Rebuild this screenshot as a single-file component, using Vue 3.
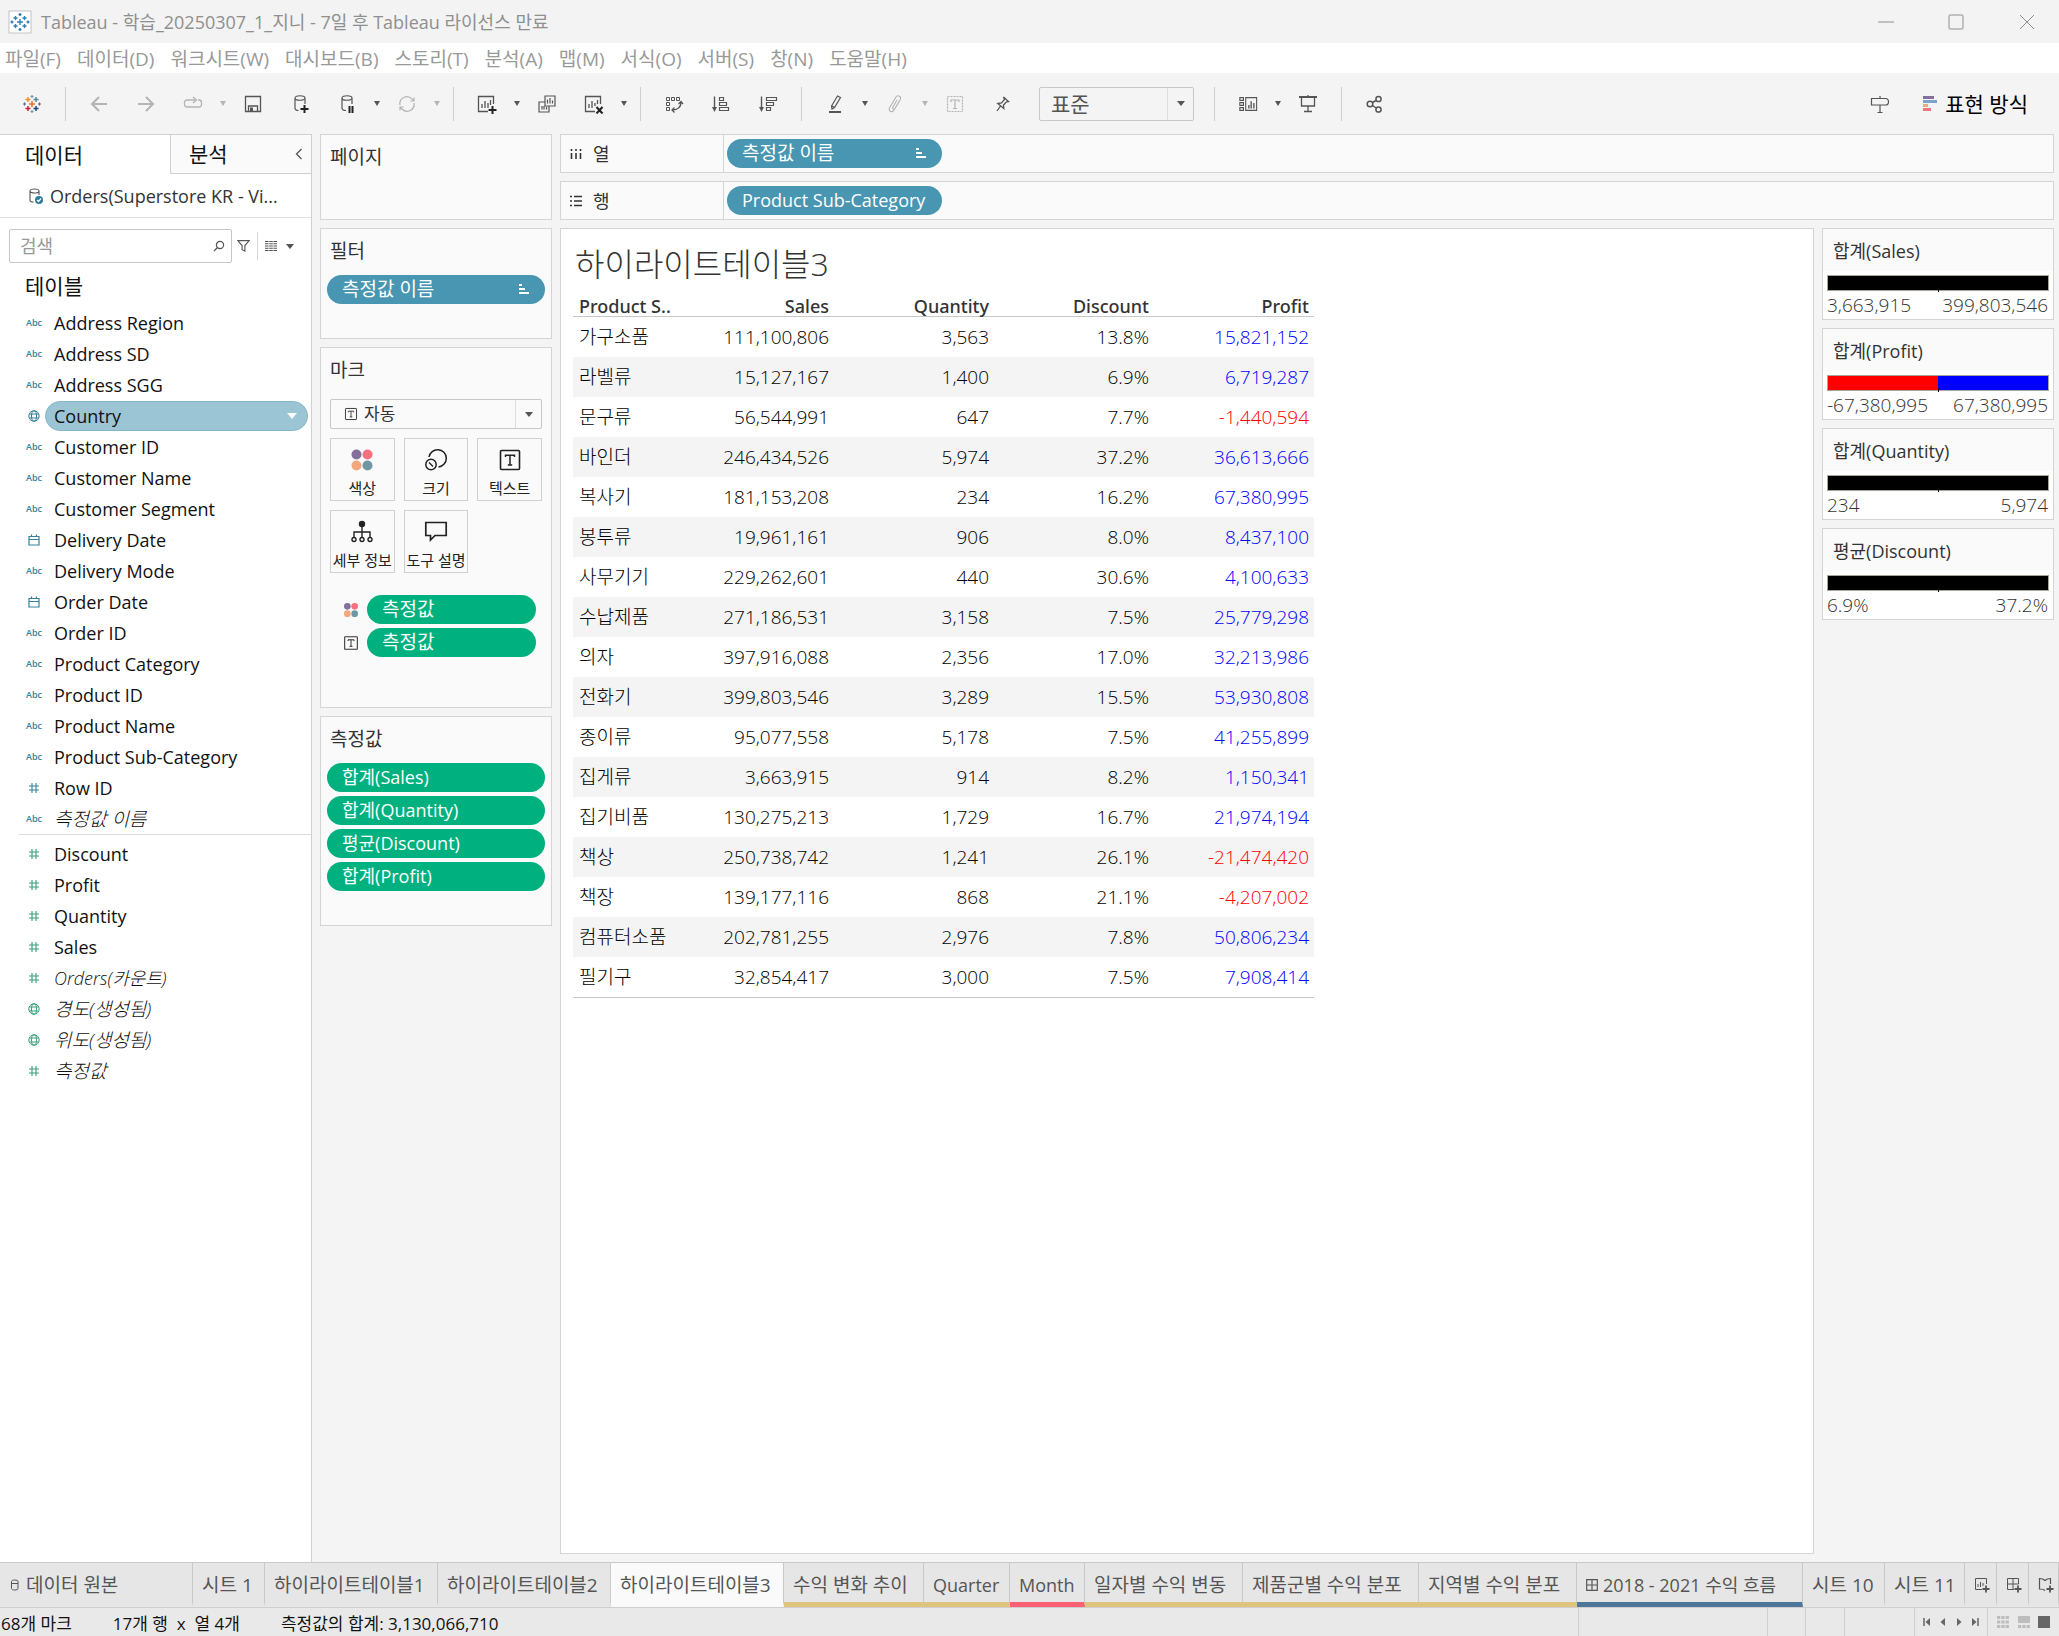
<script setup>
import { ref } from 'vue'

const menus = ['파일(F)', '데이터(D)', '워크시트(W)', '대시보드(B)', '스토리(T)', '분석(A)', '맵(M)', '서식(O)', '서버(S)', '창(N)', '도움말(H)']

const toolbar = [
  { icon: 'logo', label: '시작 페이지', cls: 'plain' },
  { sep: true },
  { icon: 'back', label: '실행 취소', cls: 'dim' },
  { icon: 'forward', label: '다시 실행', cls: 'dim' },
  { icon: 'replay', label: '재생', cls: 'dim' },
  { caret: true, cls: 'dim' },
  { icon: 'save', label: '저장' },
  { icon: 'db-add', label: '새 데이터 원본' },
  { icon: 'db-pause', label: '자동 업데이트 일시 중지' },
  { caret: true },
  { icon: 'refresh', label: '업데이트 실행', cls: 'dim' },
  { caret: true, cls: 'dim' },
  { sep: true },
  { icon: 'sheet-add', label: '새 워크시트' },
  { caret: true },
  { icon: 'duplicate', label: '복제' },
  { icon: 'sheet-clear', label: '시트 지우기' },
  { caret: true },
  { sep: true },
  { icon: 'swap', label: '행과 열 바꾸기' },
  { icon: 'sort-asc', label: '오름차순 정렬' },
  { icon: 'sort-desc', label: '내림차순 정렬' },
  { sep: true },
  { icon: 'pen', label: '하이라이트' },
  { caret: true },
  { icon: 'clip', label: '그룹 멤버', cls: 'dim' },
  { caret: true, cls: 'dim' },
  { icon: 'label', label: '마크 레이블 표시', cls: 'dim' },
  { icon: 'pin', label: '축 고정' },
]

const toolbarEnd = [
  { sep: true },
  { icon: 'cards', label: '카드 표시/숨기기' },
  { caret: true },
  { icon: 'present', label: '프레젠테이션 모드' },
  { sep: true },
  { icon: 'share', label: '공유' },
]

const dimensions = [
  { name: 'Address Region', type: 'abc' },
  { name: 'Address SD', type: 'abc' },
  { name: 'Address SGG', type: 'abc' },
  { name: 'Country', type: 'globe' },
  { name: 'Customer ID', type: 'abc' },
  { name: 'Customer Name', type: 'abc' },
  { name: 'Customer Segment', type: 'abc' },
  { name: 'Delivery Date', type: 'date' },
  { name: 'Delivery Mode', type: 'abc' },
  { name: 'Order Date', type: 'date' },
  { name: 'Order ID', type: 'abc' },
  { name: 'Product Category', type: 'abc' },
  { name: 'Product ID', type: 'abc' },
  { name: 'Product Name', type: 'abc' },
  { name: 'Product Sub-Category', type: 'abc' },
  { name: 'Row ID', type: 'hash' },
  { name: '측정값 이름', type: 'abc', generated: true },
]

const measures = [
  { name: 'Discount', type: 'hash' },
  { name: 'Profit', type: 'hash' },
  { name: 'Quantity', type: 'hash' },
  { name: 'Sales', type: 'hash' },
  { name: 'Orders(카운트)', type: 'hash', generated: true },
  { name: '경도(생성됨)', type: 'globe', generated: true },
  { name: '위도(생성됨)', type: 'globe', generated: true },
  { name: '측정값', type: 'hash', generated: true },
]

const fieldGroups = [
  { id: 'dimensions', items: dimensions },
  { id: 'measures', items: measures },
]

const selectedField = ref('Country')
const search = ref('')

const markCards = [
  { icon: 'color', label: '색상' },
  { icon: 'size', label: '크기' },
  { icon: 'text', label: '텍스트' },
  { icon: 'detail', label: '세부 정보' },
  { icon: 'tooltip', label: '도구 설명' },
]

const measureValues = ['합계(Sales)', '합계(Quantity)', '평균(Discount)', '합계(Profit)']

const columns = ['Sales', 'Quantity', 'Discount', 'Profit']
const rows = [
  ['가구소품', '111,100,806', '3,563', '13.8%', '15,821,152'],
  ['라벨류', '15,127,167', '1,400', '6.9%', '6,719,287'],
  ['문구류', '56,544,991', '647', '7.7%', '-1,440,594'],
  ['바인더', '246,434,526', '5,974', '37.2%', '36,613,666'],
  ['복사기', '181,153,208', '234', '16.2%', '67,380,995'],
  ['봉투류', '19,961,161', '906', '8.0%', '8,437,100'],
  ['사무기기', '229,262,601', '440', '30.6%', '4,100,633'],
  ['수납제품', '271,186,531', '3,158', '7.5%', '25,779,298'],
  ['의자', '397,916,088', '2,356', '17.0%', '32,213,986'],
  ['전화기', '399,803,546', '3,289', '15.5%', '53,930,808'],
  ['종이류', '95,077,558', '5,178', '7.5%', '41,255,899'],
  ['집게류', '3,663,915', '914', '8.2%', '1,150,341'],
  ['집기비품', '130,275,213', '1,729', '16.7%', '21,974,194'],
  ['책상', '250,738,742', '1,241', '26.1%', '-21,474,420'],
  ['책장', '139,177,116', '868', '21.1%', '-4,207,002'],
  ['컴퓨터소품', '202,781,255', '2,976', '7.8%', '50,806,234'],
  ['필기구', '32,854,417', '3,000', '7.5%', '7,908,414'],
]

const legends = [
  { title: '합계(Sales)', min: '3,663,915', max: '399,803,546' },
  { title: '합계(Profit)', min: '-67,380,995', max: '67,380,995', diverging: true },
  { title: '합계(Quantity)', min: '234', max: '5,974' },
  { title: '평균(Discount)', min: '6.9%', max: '37.2%' },
]

const sheets = [
  { name: '데이터 원본', icon: 'db-small' },
  { name: '시트 1' },
  { name: '하이라이트테이블1' },
  { name: '하이라이트테이블2' },
  { name: '하이라이트테이블3' },
  { name: '수익 변화 추이', color: 'yellow' },
  { name: 'Quarter', color: 'yellow' },
  { name: 'Month', color: 'pink' },
  { name: '일자별 수익 변동', color: 'yellow' },
  { name: '제품군별 수익 분포', color: 'yellow' },
  { name: '지역별 수익 분포', color: 'yellow' },
  { name: '2018 - 2021 수익 흐름', color: 'blue', icon: 'dashboard' },
  { name: '시트 10' },
  { name: '시트 11' },
]
const activeSheet = ref('하이라이트테이블3')

const newSheetButtons = [
  { icon: 'new-sheet', label: '새 워크시트' },
  { icon: 'new-dashboard', label: '새 대시보드' },
  { icon: 'new-story', label: '새 스토리' },
]

const isHangul = (text) => /^[가-힣]/.test(text)
</script>

<template>
  <svg class="defs" aria-hidden="true">
    <symbol id="i-app" viewBox="0 0 24 24">
      <rect x="1" y="1" width="22" height="22" fill="#fff" stroke="#c4c4c4" />
      <g stroke="#2f7fb5" stroke-width="1.4">
        <path d="M12 9v6M9 12h6M7.500 6v4M5.500 8h4M16.500 6v4M14.500 8h4M7.500 14v4M5.500 16h4M16.500 14v4M14.500 16h4M12 3v3M10.500 4.500h3M12 18v3M10.500 19.500h3M4 10.500v3M2.500 12h3M20 10.500v3M18.500 12h3" />
      </g>
    </symbol>
    <symbol id="i-logo" viewBox="0 0 20 20">
      <path d="M10 7v6M7 10h6" stroke="#e8762d" stroke-width="1.600" />
      <path d="M6 3v5M3.500 5.500h5" stroke="#eb912c" stroke-width="1.500" />
      <path d="M14 3v5M11.500 5.500h5" stroke="#59879b" stroke-width="1.500" />
      <path d="M6 12v5M3.500 14.500h5" stroke="#c72035" stroke-width="1.500" />
      <path d="M14 12v5M11.500 14.500h5" stroke="#1f457e" stroke-width="1.500" />
      <path d="M10 1v3M8.500 2.500h3M10 16v3M8.500 17.500h3" stroke="#7199a6" stroke-width="1.200" />
      <path d="M2.500 8.500v3M1 10h3M17.500 8.500v3M16 10h3" stroke="#5b6591" stroke-width="1.200" />
    </symbol>
    <symbol id="i-back" viewBox="0 0 20 20"><path d="M18 10H3M10 3L3 10l7 7" fill="none" stroke="currentColor" stroke-width="2" /></symbol>
    <symbol id="i-forward" viewBox="0 0 20 20"><path d="M2 10h15M10 3l7 7-7 7" fill="none" stroke="currentColor" stroke-width="2" /></symbol>
    <symbol id="i-replay" viewBox="0 0 20 20"><path d="M6 13H4a2.500 2.500 0 0 1-2.500-2.500V8.500A2.500 2.500 0 0 1 4 6h8M15 6h1a2.500 2.500 0 0 1 2.500 2.500v2A2.500 2.500 0 0 1 16 13H6M10 3l3.500 3L10 9" fill="none" stroke="currentColor" stroke-width="1.300" /></symbol>
    <symbol id="i-save" viewBox="0 0 20 20"><path d="M2.500 2.500h15v15h-15zM5.500 17v-5h9v5" fill="none" stroke="currentColor" stroke-width="1.300" /><path d="M7 13.500h3V17H7z" fill="currentColor" /></symbol>
    <symbol id="i-db-add" viewBox="0 0 20 20"><path d="M5 4v10c0 1.500 1 2.500 3.500 2.500M15 4v6M5 4c0-3 10-3 10 0s-10 3-10 0z" fill="none" stroke="currentColor" stroke-width="1.200" /><path d="M14.500 11v8M10.500 15h8" stroke="#222" stroke-width="2" /></symbol>
    <symbol id="i-db-pause" viewBox="0 0 20 20"><path d="M5 4v10c0 1.500 1 2.500 4 2.500M15 4v6M5 4c0-3 10-3 10 0s-10 3-10 0z" fill="none" stroke="currentColor" stroke-width="1.200" /><path d="M12.500 12v7M15.500 12v7" stroke="#222" stroke-width="2" /></symbol>
    <symbol id="i-refresh" viewBox="0 0 20 20"><path d="M3 11a7 7 0 0 1 12-6l2 2M17 9a7 7 0 0 1-12 6l-2-2M17 3.500V7h-3.500M3 16.500V13h3.500" fill="none" stroke="currentColor" stroke-width="1.200" /></symbol>
    <symbol id="i-sheet-add" viewBox="0 0 20 20"><path d="M16.500 10V2.500h-15v15H11M5 14v-4M8 14V7M11 14V9M13.500 11V6" fill="none" stroke="currentColor" stroke-width="1.300" /><path d="M15.500 12v8M11.500 16h8" stroke="#222" stroke-width="2" /></symbol>
    <symbol id="i-duplicate" viewBox="0 0 20 20"><path d="M8 2h10v10H8zM8 8H2v10h10v-6M10.500 9.500v-4M13 9.500V4M15.500 9.500v-3M5 15.500V12M7 15.500V12M9.500 15.500V13" fill="none" stroke="currentColor" stroke-width="1.200" /></symbol>
    <symbol id="i-sheet-clear" viewBox="0 0 20 20"><path d="M16.500 10V2.500h-15v15H11M5 14v-4M8 14V7M11 12V9M13.500 10V6" fill="none" stroke="currentColor" stroke-width="1.300" /><path d="M12.500 13l6 6.500M18.500 13l-6 6.500" stroke="#222" stroke-width="2" /></symbol>
    <symbol id="i-swap" viewBox="0 0 20 20"><path d="M2.500 3.500h3v3h-3zM7.500 3.500h3v3h-3zM12.500 3.500h3v3h-3zM2.500 8.500h3v3h-3zM2.500 13.500h3v3h-3z" fill="none" stroke="currentColor" /><path d="M8 16c5 0 9-2 9-8M14.500 10L17 7.500l2 2.500M10.500 13.500L8 16l2.500 2.500" fill="none" stroke="currentColor" stroke-width="1.300" /></symbol>
    <symbol id="i-sort-asc" viewBox="0 0 20 20"><path d="M8.500 3.500h4v3h-4zM8.500 8.500h7v3h-7zM8.500 13.500h9v3h-9z" fill="none" stroke="currentColor" stroke-width="1.200" /><path d="M3.500 2.500V14" stroke="currentColor" stroke-width="1.400" /><path d="M1 13h5l-2.500 5z" fill="currentColor" /></symbol>
    <symbol id="i-sort-desc" viewBox="0 0 20 20"><path d="M8.500 3.500h10v3h-10zM8.500 8.500h7v3h-7zM8.500 13.500h4v3h-4z" fill="none" stroke="currentColor" stroke-width="1.200" /><path d="M3.500 2.500V14" stroke="currentColor" stroke-width="1.400" /><path d="M1 13h5l-2.500 5z" fill="currentColor" /></symbol>
    <symbol id="i-pen" viewBox="0 0 20 20"><path d="M12.500 2l3 1.500-6 10-2.500 1.500-.5-3z M7 12l2.500 1.500" fill="none" stroke="currentColor" stroke-width="1.200" /><path d="M4 17h12v2H4z" fill="currentColor" /></symbol>
    <symbol id="i-clip" viewBox="0 0 20 20"><path d="M14.500 7l-5.500 9c-1 1.800-2.500 2-3.800 1.200S4 14.500 5 13l6-10c.8-1.300 2.300-1.500 3.500-.8s1.500 2 .8 3.300l-5.500 9c-.8 1.200-2.800.2-2-1.200L12 6" fill="none" stroke="currentColor" stroke-width="1.100" /></symbol>
    <symbol id="i-label" viewBox="0 0 20 20"><path d="M2.500 2.500h15v15h-15z" fill="none" stroke="currentColor" stroke-width="1.200" stroke-dasharray="2 1" /><path d="M6 8V6h8v2M10 6v8M8 14.500h4" fill="none" stroke="currentColor" stroke-width="1.200" /></symbol>
    <symbol id="i-pin" viewBox="0 0 20 20"><path d="M11.500 3l5 4.500-2 .3-3 3.200.3 3.500-6-5 3.700-.5 3-3.500zM8.500 12L5 17" fill="none" stroke="currentColor" stroke-width="1.300" /></symbol>
    <symbol id="i-cards" viewBox="0 0 22 20"><path d="M2 3h4v3H2zM2 8.500h4v3H2zM2 14h4v3H2zM8.500 3h12v14h-12z" fill="none" stroke="currentColor" stroke-width="1.200" /><path d="M12 15v-4M14.500 15V7M17.500 15V9" stroke="currentColor" stroke-width="1.500" /></symbol>
    <symbol id="i-present" viewBox="0 0 20 20"><path d="M1 3h18" stroke="currentColor" stroke-width="2" /><path d="M3.500 3v9h13V3M10 1v2M10 12v5.500M6 17.500h8" fill="none" stroke="currentColor" stroke-width="1.300" /></symbol>
    <symbol id="i-share" viewBox="0 0 20 20"><g fill="none" stroke="currentColor" stroke-width="1.500"><circle cx="5" cy="10" r="2.800" /><circle cx="13.500" cy="5" r="2.600" /><circle cx="13.500" cy="15.500" r="2.600" /><path d="M7.500 8.500l3.500-2M7.500 11.500l3.700 2.500" /></g></symbol>
    <symbol id="i-guide" viewBox="0 0 20 20"><path d="M1.500 4.500h14c2 0 3 1.500 3 3.200s-1 3.300-3 3.300h-14zM10 2v2.500M10 11v8M7.500 18.500h5" fill="none" stroke="currentColor" stroke-width="1.200" /></symbol>
    <symbol id="i-showme" viewBox="0 0 16 16"><path d="M0 0h11v3H0z" fill="#83709b" /><path d="M0 4h14v3H0z" fill="#7ba4c9" /><path d="M0 8h5v3H0z" fill="#f4a77c" /><path d="M0 12h8v3H0z" fill="#f7707f" /></symbol>
    <symbol id="i-source" viewBox="0 0 16 16"><path d="M2 3v9.500c0 1 1.500 1.500 3.500 1.500M11 3v4M2 3c0-2.700 9-2.700 9 0s-9 2.700-9 0z" fill="none" stroke="#555" stroke-width="1.100" /><circle cx="11" cy="12" r="4" fill="#2f7a9b" /><path d="M9 12l1.500 1.500L13 10.500" fill="none" stroke="#fff" stroke-width="1.200" /></symbol>
    <symbol id="i-search" viewBox="0 0 12 12"><circle cx="7" cy="5" r="3.600" fill="none" stroke="currentColor" stroke-width="1.200" /><path d="M4.500 7.500L1 11" stroke="currentColor" stroke-width="1.300" /></symbol>
    <symbol id="i-filter" viewBox="0 0 14 14"><path d="M.8 1.200h12.400L8.500 6.500v6l-3-1.500V6.500z" fill="none" stroke="currentColor" stroke-width="1.200" /></symbol>
    <symbol id="i-grid" viewBox="0 0 12 12"><path d="M0 1.500h12M0 3.700h12M0 6h12M0 8.300h12M0 10.500h12" stroke="currentColor" stroke-width="1.100" stroke-dasharray="3.600 .6" /></symbol>
    <symbol id="i-globe" viewBox="0 0 12 12"><g fill="none" stroke="currentColor"><circle cx="6" cy="6" r="5.200" /><ellipse cx="6" cy="6" rx="2.500" ry="5.200" /><path d="M1.500 4h9M1.500 8h9" /></g></symbol>
    <symbol id="i-date" viewBox="0 0 12 12"><path d="M1 2.500h10v8.500H1zM1 5.500h10M3.500.5v2M8.500.5v2" fill="none" stroke="currentColor" stroke-width="1.200" /></symbol>
    <symbol id="i-hash" viewBox="0 0 12 12"><path d="M4 1v10M8 1v10M1 4h10M1 8h10" stroke="currentColor" stroke-width="1.100" /></symbol>
    <symbol id="i-color" viewBox="0 0 24 24"><circle cx="6.500" cy="6.500" r="5" fill="#83709b" /><circle cx="17.500" cy="6.500" r="5" fill="#f7707f" /><circle cx="6.500" cy="17.500" r="5" fill="#f4a77c" /><circle cx="17.500" cy="17.500" r="5" fill="#6f98a5" /></symbol>
    <symbol id="i-size" viewBox="0 0 24 24"><g fill="none" stroke="currentColor" stroke-width="1.500"><path d="M5 9a8.700 8.700 0 1 1 9.500 10" /><circle cx="7" cy="16.500" r="5.200" /><path d="M5 14.500l4 4" /></g></symbol>
    <symbol id="i-text" viewBox="0 0 24 24"><rect x="2.500" y="2.500" width="19" height="19" rx="1" fill="none" stroke="currentColor" stroke-width="1.600" /><path d="M7.500 9V7.200h9V9M12 7.200V17M9.800 17h4.400" fill="none" stroke="currentColor" stroke-width="1.500" /></symbol>
    <symbol id="i-detail" viewBox="0 0 24 24"><circle cx="12" cy="4" r="3.200" fill="currentColor" /><g fill="none" stroke="currentColor" stroke-width="1.400"><path d="M12 6v11M4 17v-5h16v5" /><circle cx="4" cy="19.500" r="2" /><circle cx="12" cy="19.500" r="2" /><circle cx="20" cy="19.500" r="2" /></g></symbol>
    <symbol id="i-tooltip" viewBox="0 0 24 24"><path d="M1.800 2.500h20.400v13H11L6.500 20v-4.500H1.800z" fill="none" stroke="currentColor" stroke-width="1.700" /></symbol>
    <symbol id="i-columns" viewBox="0 0 12 12"><path d="M1.500 1v2M1.500 5v6M6 1v2M6 5v6M10.500 1v2M10.500 5v6" stroke="currentColor" stroke-width="1.600" /></symbol>
    <symbol id="i-rows" viewBox="0 0 12 12"><path d="M0 1.500h2M4 1.500h8M0 6h2M4 6h8M0 10.500h2M4 10.500h8" stroke="currentColor" stroke-width="1.600" /></symbol>
    <symbol id="i-sorted" viewBox="0 0 12 12"><path d="M1 2h3M1 6h6M1 10h10" stroke="currentColor" stroke-width="2" /></symbol>
    <symbol id="i-db-small" viewBox="0 0 12 12"><path d="M2.500 2.500v7c0 2 6.500 2 6.500 0v-7c0-2-6.500-2-6.500 0zM2.500 4.500h6.500" fill="none" stroke="currentColor" /></symbol>
    <symbol id="i-dashboard" viewBox="0 0 12 12"><path d="M.7.700h10.600v10.600H.7zM6 .7v10.600M.7 6h10.600" fill="none" stroke="currentColor" stroke-width="1.200" /></symbol>
    <symbol id="i-new-sheet" viewBox="0 0 16 16"><path d="M12.500 7V1.500h-11v11H8M4 10V7M6.500 10V5M9 9V6" fill="none" stroke="currentColor" /><path d="M12 8.500v7M8.500 12h7" stroke="currentColor" stroke-width="1.800" /></symbol>
    <symbol id="i-new-dashboard" viewBox="0 0 16 16"><path d="M12.500 7V1.500h-11v11H8M7 1.500v11M1.500 7h11" fill="none" stroke="currentColor" /><path d="M12 8.500v7M8.500 12h7" stroke="currentColor" stroke-width="1.800" /></symbol>
    <symbol id="i-new-story" viewBox="0 0 16 16"><path d="M12.500 7V1.500c-2.500 0-4 .5-5.500 2-1.500-1.500-3-2-5.500-2v10.500c2 0 4 0 5.500 1.500" fill="none" stroke="currentColor" stroke-width="1.200" /><path d="M12 8.500v7M8.500 12h7" stroke="currentColor" stroke-width="1.800" /></symbol>
  </svg>

  <div class="app">
    <header class="titlebar">
      <svg class="app-icon"><use href="#i-app" /></svg>
      <span class="window-title">Tableau - 학습_20250307_1_지니 - 7일 후 Tableau 라이선스 만료</span>
      <div class="window-buttons">
        <button aria-label="최소화"><svg viewBox="0 0 16 16"><path d="M0 8h16" stroke="currentColor" /></svg></button>
        <button aria-label="최대화"><svg viewBox="0 0 16 16"><rect x="1" y="1" width="14" height="14" rx="1" fill="none" stroke="currentColor" /></svg></button>
        <button aria-label="닫기"><svg viewBox="0 0 16 16"><path d="M1 1l14 14M15 1L1 15" stroke="currentColor" /></svg></button>
      </div>
    </header>

    <nav class="menubar">
      <button v-for="m in menus" :key="m">{{ m }}</button>
    </nav>

    <div class="toolbar">
      <template v-for="(t, i) in toolbar" :key="i">
        <span v-if="t.sep" class="sep"></span>
        <button v-else-if="t.caret" class="caret-button" :class="t.cls" aria-label="옵션"><i class="caret"></i></button>
        <button v-else class="tool" :class="t.cls" :aria-label="t.label"><svg><use :href="'#i-' + t.icon" /></svg></button>
      </template>
      <div class="dropdown fit">
        <select aria-label="맞춤"><option>표준</option></select>
        <span class="drop-end"><i class="caret"></i></span>
      </div>
      <template v-for="(t, i) in toolbarEnd" :key="'end' + i">
        <span v-if="t.sep" class="sep"></span>
        <button v-else-if="t.caret" class="caret-button" aria-label="옵션"><i class="caret"></i></button>
        <button v-else class="tool" :aria-label="t.label"><svg><use :href="'#i-' + t.icon" /></svg></button>
      </template>
      <div class="toolbar-right">
        <button class="tool" aria-label="데이터 가이드"><svg><use href="#i-guide" /></svg></button>
        <button class="show-me"><svg><use href="#i-showme" /></svg>표현 방식</button>
      </div>
    </div>

    <main class="body">
      <aside class="data-pane">
        <div class="pane-tabs">
          <button class="pane-tab current">데이터</button>
          <button class="pane-tab">분석</button>
          <button class="collapse" aria-label="접기"><svg viewBox="0 0 8 12"><path d="M6.500 1L1.500 6l5 5" fill="none" stroke="currentColor" stroke-width="1.300" /></svg></button>
        </div>
        <div class="source"><svg><use href="#i-source" /></svg>Orders(Superstore KR - Vi...</div>
        <div class="search-row">
          <label class="search-box">
            <input v-model="search" type="text" placeholder="검색" aria-label="검색" />
            <svg><use href="#i-search" /></svg>
          </label>
          <button class="filter-button" aria-label="필터"><svg><use href="#i-filter" /></svg></button>
          <button class="view-button" aria-label="보기"><svg><use href="#i-grid" /></svg><i class="caret"></i></button>
        </div>
        <h2 class="tables-title">테이블</h2>
        <ul v-for="g in fieldGroups" :key="g.id" class="fields" :class="g.id">
          <li v-for="f in g.items" :key="f.name" :class="{ selected: f.name === selectedField }" @click="selectedField = f.name">
            <span v-if="f.type === 'abc'" class="abc">Abc</span>
            <svg v-else class="type"><use :href="'#i-' + f.type" /></svg>
            <span class="field" :class="{ generated: f.generated, ko: isHangul(f.name) }">{{ f.name }}<i v-if="f.name === selectedField" class="caret"></i></span>
          </li>
        </ul>
      </aside>

      <section class="cards">
        <div class="card pages"><h3>페이지</h3></div>
        <div class="card filters">
          <h3>필터</h3>
          <button class="pill blue ko">측정값 이름<svg><use href="#i-sorted" /></svg></button>
        </div>
        <div class="card marks">
          <h3>마크</h3>
          <div class="dropdown mark-type">
            <svg><use href="#i-text" /></svg>
            <select aria-label="마크 유형"><option>자동</option></select>
            <span class="drop-end"><i class="caret"></i></span>
          </div>
          <div class="mark-grid">
            <button v-for="c in markCards" :key="c.icon"><svg><use :href="'#i-' + c.icon" /></svg>{{ c.label }}</button>
          </div>
          <div class="encodings">
            <div><svg><use href="#i-color" /></svg><button class="pill green ko">측정값</button></div>
            <div><svg><use href="#i-text" /></svg><button class="pill green ko">측정값</button></div>
          </div>
        </div>
        <div class="card values">
          <h3>측정값</h3>
          <button v-for="v in measureValues" :key="v" class="pill green">{{ v }}</button>
        </div>
      </section>

      <section class="work">
        <div class="shelf">
          <div class="shelf-label"><svg><use href="#i-columns" /></svg>열</div>
          <button class="pill blue ko">측정값 이름<svg><use href="#i-sorted" /></svg></button>
        </div>
        <div class="shelf">
          <div class="shelf-label"><svg><use href="#i-rows" /></svg>행</div>
          <button class="pill blue">Product Sub-Category</button>
        </div>
        <div class="view-row">
          <article class="view">
            <h1>하이라이트테이블3</h1>
            <table>
              <thead>
                <tr>
                  <th scope="col">Product S..</th>
                  <th v-for="c in columns" :key="c" scope="col">{{ c }}</th>
                </tr>
              </thead>
              <tbody>
                <tr v-for="r in rows" :key="r[0]">
                  <th scope="row">{{ r[0] }}</th>
                  <td>{{ r[1] }}</td>
                  <td>{{ r[2] }}</td>
                  <td>{{ r[3] }}</td>
                  <td :class="r[4].startsWith('-') ? 'negative' : 'positive'">{{ r[4] }}</td>
                </tr>
              </tbody>
            </table>
          </article>
          <aside class="legends">
            <div v-for="l in legends" :key="l.title" class="legend">
              <h3>{{ l.title }}</h3>
              <div class="ramp" :class="{ diverging: l.diverging }"></div>
              <div class="range"><span>{{ l.min }}</span><span>{{ l.max }}</span></div>
            </div>
          </aside>
        </div>
      </section>
    </main>

    <nav class="sheets">
      <button v-for="s in sheets" :key="s.name" :class="[s.color, { active: s.name === activeSheet, ko: isHangul(s.name) }]" @click="activeSheet = s.name">
        <svg v-if="s.icon"><use :href="'#i-' + s.icon" /></svg>{{ s.name }}
      </button>
      <button v-for="b in newSheetButtons" :key="b.icon" class="new" :aria-label="b.label"><svg><use :href="'#i-' + b.icon" /></svg></button>
    </nav>

    <footer class="status">
      <div class="summary"><span>68개 마크</span><span>17개 행&nbsp; x &nbsp;열 4개</span><span>측정값의 합계: 3,130,066,710</span></div>
      <div></div>
      <div></div>
      <div></div>
      <div></div>
      <div class="pager">
        <button aria-label="처음"><svg viewBox="0 0 8 10"><path d="M1 1v8" stroke="currentColor" stroke-width="1.500" /><path d="M7 1v8L2.500 5z" fill="currentColor" /></svg></button>
        <button aria-label="이전"><svg viewBox="0 0 8 10"><path d="M6 1v8L1.500 5z" fill="currentColor" /></svg></button>
        <button aria-label="다음"><svg viewBox="0 0 8 10"><path d="M2 1v8l4.500-4z" fill="currentColor" /></svg></button>
        <button aria-label="마지막"><svg viewBox="0 0 8 10"><path d="M7 1v8" stroke="currentColor" stroke-width="1.500" /><path d="M1 1v8l4.500-4z" fill="currentColor" /></svg></button>
      </div>
      <div class="layouts">
        <button aria-label="시트 정렬"><svg viewBox="0 0 12 12"><path d="M0 1.500h12M0 6h12M0 10.500h12" stroke="#bdbdbd" stroke-width="3" stroke-dasharray="3.300 1" /></svg></button>
        <button aria-label="필름 스트립"><svg viewBox="0 0 12 12"><path d="M0 0h12v7H0z" fill="#bdbdbd" /><path d="M0 10.500h12" stroke="#bdbdbd" stroke-width="3" stroke-dasharray="3.300 1" /></svg></button>
        <button aria-label="탭 표시"><svg viewBox="0 0 12 12"><path d="M0 0h12v12H0z" fill="#666" /></svg></button>
      </div>
    </footer>
  </div>
</template>

<style>
body {
  margin: 0;
}
</style>

<style scoped>
.defs {
  position: absolute;
  width: 0;
  height: 0;
}
.app {
  display: flex;
  flex-direction: column;
  min-height: 100vh;
  background: #f4f4f4;
  color: #333;
  font-family: "Open Sans", "Noto Sans CJK KR", sans-serif;
  font-size: 18px;
  line-height: 24px;
}
.app * {
  box-sizing: border-box;
}
button,
input,
select {
  margin: 0;
  padding: 0;
  border: 0;
  background: none;
  color: inherit;
  font: inherit;
}
svg {
  display: block;
  flex: none;
}
h1,
h2,
h3,
ul {
  margin: 0;
  padding: 0;
  font-weight: 400;
  list-style: none;
}
.ko {
  font-size: 19px;
}
.caret {
  width: 0;
  height: 0;
  border: 4px solid transparent;
  border-top: 5px solid currentColor;
  border-bottom: 0;
}

/* window chrome */
.titlebar {
  display: flex;
  align-items: center;
  height: 43px;
  padding: 0 8px;
  background: #f3f3f3;
  color: #8f8f8f;
}
.app-icon {
  width: 24px;
  height: 24px;
  margin-right: 9px;
}
.window-buttons {
  display: flex;
  margin-left: auto;
}
.window-buttons button {
  display: grid;
  place-items: center;
  width: 70px;
  height: 42px;
}
.window-buttons button:last-child {
  width: 48px;
  margin-left: 12px;
}
.window-buttons svg {
  width: 16px;
  height: 16px;
}
.menubar {
  display: flex;
  align-items: center;
  gap: 16px;
  height: 30px;
  padding: 2px 5px 0;
  background: #fff;
  color: #999;
  font-size: 19px;
}
.toolbar {
  display: flex;
  align-items: center;
  height: 61px;
  padding: 0 31px 0 8px;
  color: #555;
}
.tool {
  display: grid;
  place-items: center;
  width: 47px;
  height: 34px;
}
.tool svg {
  width: 20px;
  height: 20px;
}
.caret-button {
  display: grid;
  place-items: center;
  width: 13px;
  height: 34px;
}
.caret-button .caret {
  border-width: 5px 3px 0;
}
.dim {
  color: #b4b4b4;
}
.sep {
  width: 1px;
  height: 34px;
  margin: 0 9px 0 10px;
  background: #cfcfcf;
}
.dropdown {
  position: relative;
  border: 1px solid #c8c8c8;
  border-radius: 2px;
}
.dropdown select {
  width: 100%;
  height: 100%;
  appearance: none;
}
.drop-end {
  position: absolute;
  top: 0;
  right: 0;
  bottom: 0;
  display: grid;
  place-items: center;
  width: 26px;
  border-left: 1px solid #dedede;
  color: #555;
  pointer-events: none;
}
.fit {
  width: 155px;
  height: 34px;
  margin: 0 10px 0 14px;
}
.fit select {
  padding-left: 11px;
  font-size: 21px;
}
.toolbar-right {
  display: flex;
  align-items: center;
  gap: 20px;
  margin-left: auto;
}
.show-me {
  display: flex;
  align-items: center;
  gap: 6px;
  color: #000;
  font-size: 21px;
}
.show-me svg {
  width: 16px;
  height: 16px;
}

/* main area */
.body {
  display: flex;
  flex: 1;
}
.data-pane {
  width: 312px;
  flex: none;
  border-top: 1px solid #d0d0d0;
  border-right: 1px solid #d0d0d0;
  background: #fff;
  color: #111;
}
.pane-tabs {
  display: flex;
  height: 39px;
  font-size: 21px;
}
.pane-tab {
  flex: 1;
  padding-left: 18px;
  border: solid #d0d0d0;
  border-width: 0 0 1px 1px;
  background: #fafafa;
  text-align: left;
}
.pane-tab.current {
  flex: none;
  width: 170px;
  padding-left: 25px;
  border: 0;
  background: none;
}
.collapse {
  display: grid;
  place-items: center;
  width: 24px;
  border-bottom: 1px solid #d0d0d0;
  background: #fafafa;
  color: #555;
}
.collapse svg {
  width: 8px;
  height: 12px;
}
.source {
  display: flex;
  align-items: center;
  gap: 6px;
  height: 44px;
  padding-left: 28px;
  border-bottom: 1px solid #e2e2e2;
  color: #333;
}
.source svg {
  width: 16px;
  height: 16px;
}
.search-row {
  display: flex;
  align-items: center;
  padding: 11px 0 0 9px;
  color: #555;
}
.search-box {
  display: flex;
  align-items: center;
  width: 223px;
  height: 34px;
  padding: 0 6px 0 10px;
  border: 1px solid #c6c6c6;
  border-radius: 2px;
}
.search-box input {
  flex: 1;
  min-width: 0;
  outline: 0;
}
.search-box input::placeholder {
  color: #999;
}
.search-box svg {
  width: 12px;
  height: 12px;
}
.filter-button {
  padding: 7px 7px 7px 5px;
  border-right: 1px solid #d8d8d8;
}
.filter-button svg {
  width: 13px;
  height: 14px;
}
.view-button {
  display: flex;
  align-items: center;
  gap: 9px;
  padding-left: 7px;
}
.view-button svg {
  width: 12px;
  height: 12px;
}
.tables-title {
  margin: 8px 0 6px;
  padding-left: 25px;
  font-size: 21px;
  line-height: 30px;
}
.fields li {
  display: flex;
  align-items: center;
  height: 31px;
}
.fields .abc {
  width: 37px;
  flex: none;
  padding-left: 18px;
  font-size: 9px;
  font-weight: 600;
  line-height: 12px;
}
.fields .abc,
.fields .type {
  margin-left: 8px;
  color: #34819c;
}
.fields .type {
  width: 12px;
  height: 12px;
  margin: 0 5px 0 28px;
}
.measures .type {
  color: #3b9f79;
}
.field {
  display: flex;
  flex: 1;
  align-items: center;
  justify-content: space-between;
  height: 30px;
  margin-right: 3px;
  padding: 0 10px 0 8px;
  border: 1px solid transparent;
  border-radius: 15px;
}
.selected .field {
  border-color: #85b7ca;
  background: #9bc4d4;
}
.selected .caret {
  border-width: 6px 5px 0;
  color: #fff;
}
.generated {
  font-style: italic;
  font-weight: 300;
}
.dimensions::after {
  content: "";
  display: block;
  height: 1px;
  margin: 0 0 3px 19px;
  background: #dadada;
}

/* cards */
.cards {
  display: flex;
  flex: none;
  flex-direction: column;
  gap: 8px;
  width: 232px;
  margin-left: 8px;
}
.card {
  display: flex;
  flex-direction: column;
  padding: 10px 6px;
  border: 1px solid #d4d4d4;
  background: #fafafa;
}
.card h3 {
  padding-left: 3px;
  font-size: 19px;
}
.pages {
  min-height: 86px;
}
.filters {
  min-height: 111px;
}
.filters .pill {
  margin-top: 12px;
}
.marks {
  min-height: 361px;
}
.values {
  gap: 4px;
  min-height: 210px;
}
.values h3 {
  margin-bottom: 8px;
}
.pill {
  display: flex;
  flex: none;
  align-items: center;
  justify-content: space-between;
  height: 29px;
  padding: 0 15px 2px;
  border-radius: 15px;
  color: #fff;
  white-space: nowrap;
}
.pill svg {
  width: 12px;
  height: 12px;
}
.blue.pill {
  background: #4996b2;
}
.green.pill {
  background: #00b180;
}
.mark-type {
  height: 30px;
  margin: 17px 3px 9px;
}
.mark-type select {
  padding-left: 33px;
  font-size: 17px;
}
.mark-type svg {
  position: absolute;
  top: 7px;
  left: 13px;
  width: 14px;
  height: 14px;
}
.mark-grid {
  display: grid;
  grid-template-columns: repeat(3, 1fr);
  gap: 9px;
  margin: 0 3px;
  color: #222;
}
.mark-grid button {
  display: flex;
  flex-direction: column;
  align-items: center;
  gap: 5px;
  height: 63px;
  padding-top: 9px;
  border: 1px solid #d0d0d0;
  font-size: 15px;
  line-height: 22px;
  white-space: nowrap;
}
.mark-grid svg {
  width: 24px;
  height: 24px;
}
.encodings {
  display: grid;
  gap: 4px;
  margin-top: 22px;
}
.encodings div {
  display: flex;
  align-items: center;
  gap: 8px;
  padding: 0 9px 0 16px;
}
.encodings svg {
  width: 16px;
  height: 16px;
}
.encodings .pill {
  flex: 1;
}

/* shelves and view */
.work {
  display: flex;
  flex: 1;
  flex-direction: column;
  gap: 8px;
  min-width: 0;
  padding: 0 5px 8px 8px;
}
.shelf {
  display: flex;
  align-items: center;
  height: 39px;
  border: 1px solid #d4d4d4;
  background: #fafafa;
}
.shelf-label {
  display: flex;
  align-items: center;
  gap: 11px;
  width: 163px;
  height: 100%;
  padding-left: 9px;
  border-right: 1px solid #d4d4d4;
}
.shelf-label svg {
  width: 12px;
  height: 12px;
}
.shelf .pill {
  width: 215px;
  margin-left: 3px;
}
.view-row {
  display: flex;
  flex: 1;
  gap: 8px;
}
.view {
  flex: 1;
  padding: 15px 12px;
  border: 1px solid #d4d4d4;
  background: #fff;
}
.view h1 {
  margin-bottom: 12px;
  padding-left: 2px;
  font-size: 32px;
  font-weight: 300;
  line-height: 40px;
}
.view table {
  border-bottom: 1px solid #c8c8c8;
  border-spacing: 0;
  table-layout: fixed;
  width: 741px;
}
.view th,
.view td {
  height: 40px;
  padding: 0 5px 0 0;
  color: #000;
  font-size: 19px;
  font-weight: 300;
  text-align: right;
}
.view thead th {
  width: 160px;
  height: 21px;
  border-bottom: 1px solid #c8c8c8;
  color: #333;
  font-family: "Noto Sans", "Open Sans", sans-serif;
  font-size: 18px;
  font-weight: 500;
  line-height: 20px;
  white-space: nowrap;
}
.view th:first-child {
  width: 101px;
  padding: 0 0 0 6px;
  text-align: left;
}
.view tbody tr:nth-child(even) > * {
  background: #f4f4f4;
}
.view td.positive {
  color: #00f;
}
.view td.negative {
  color: #f00;
}
.legends {
  display: flex;
  flex: none;
  flex-direction: column;
  gap: 8px;
  width: 232px;
}
.legend {
  height: 92px;
  border: 1px solid #d4d4d4;
  background: #fff;
}
.legend h3 {
  height: 42px;
  padding: 10px 10px 0;
  background: #fafafa;
  font-size: 18px;
}
.ramp {
  height: 16px;
  margin: 4px;
  border: 1px solid #a9a59a;
  background: #000;
}
.ramp.diverging {
  background: linear-gradient(90deg, #f00 50%, #00f 50%);
}
.ramp::after {
  content: "";
  display: block;
  width: 1px;
  height: 4px;
  margin: 12px auto 0;
  background: #000;
}
.range {
  display: flex;
  justify-content: space-between;
  padding: 0 5px 0 4px;
  color: #333;
  font-size: 19px;
  font-weight: 300;
  line-height: 20px;
}

/* sheet tabs and status */
.sheets {
  display: grid;
  grid-template-columns: 193fr 72fr 173fr 173fr 173fr 140fr 86fr 75fr 158fr 176fr 158fr 226fr 82fr 80fr 32fr 32fr 30fr;
  height: 46px;
  border-top: 1px solid #c9c9c9;
  border-bottom: 1px solid #cfcfcf;
  background: #e6e6e6;
  color: #555;
}
.sheets button {
  display: flex;
  align-items: center;
  gap: 5px;
  min-width: 0;
  padding: 5px 0 0 9px;
  border-right: 1px solid #c9c9c9;
  border-bottom: 5px solid transparent;
  white-space: nowrap;
}
.sheets .active {
  background: #fafafa;
}
.sheets .yellow {
  border-bottom-color: #dfc57b;
}
.sheets .pink {
  border-bottom-color: #f96074;
}
.sheets .blue {
  border-bottom-color: #4e779a;
}
.sheets svg {
  width: 12px;
  height: 12px;
}
.sheets .new svg {
  width: 16px;
  height: 16px;
}
.status {
  display: grid;
  grid-template-columns: 1579fr 189fr 38fr 39fr 70fr 73fr 71fr;
  height: 28px;
  background: #e9e9e9;
  color: #111;
  font-size: 17px;
}
.status > div {
  display: flex;
  align-items: center;
  border-right: 1px solid #cfcfcf;
}
.status > div:last-child {
  border: 0;
}
.status .summary {
  gap: 41px;
  padding: 3px 0 0 1px;
}
.pager,
.layouts {
  justify-content: space-evenly;
  color: #666;
}
.pager svg {
  width: 8px;
  height: 10px;
}
.layouts svg {
  width: 12px;
  height: 12px;
}
</style>
